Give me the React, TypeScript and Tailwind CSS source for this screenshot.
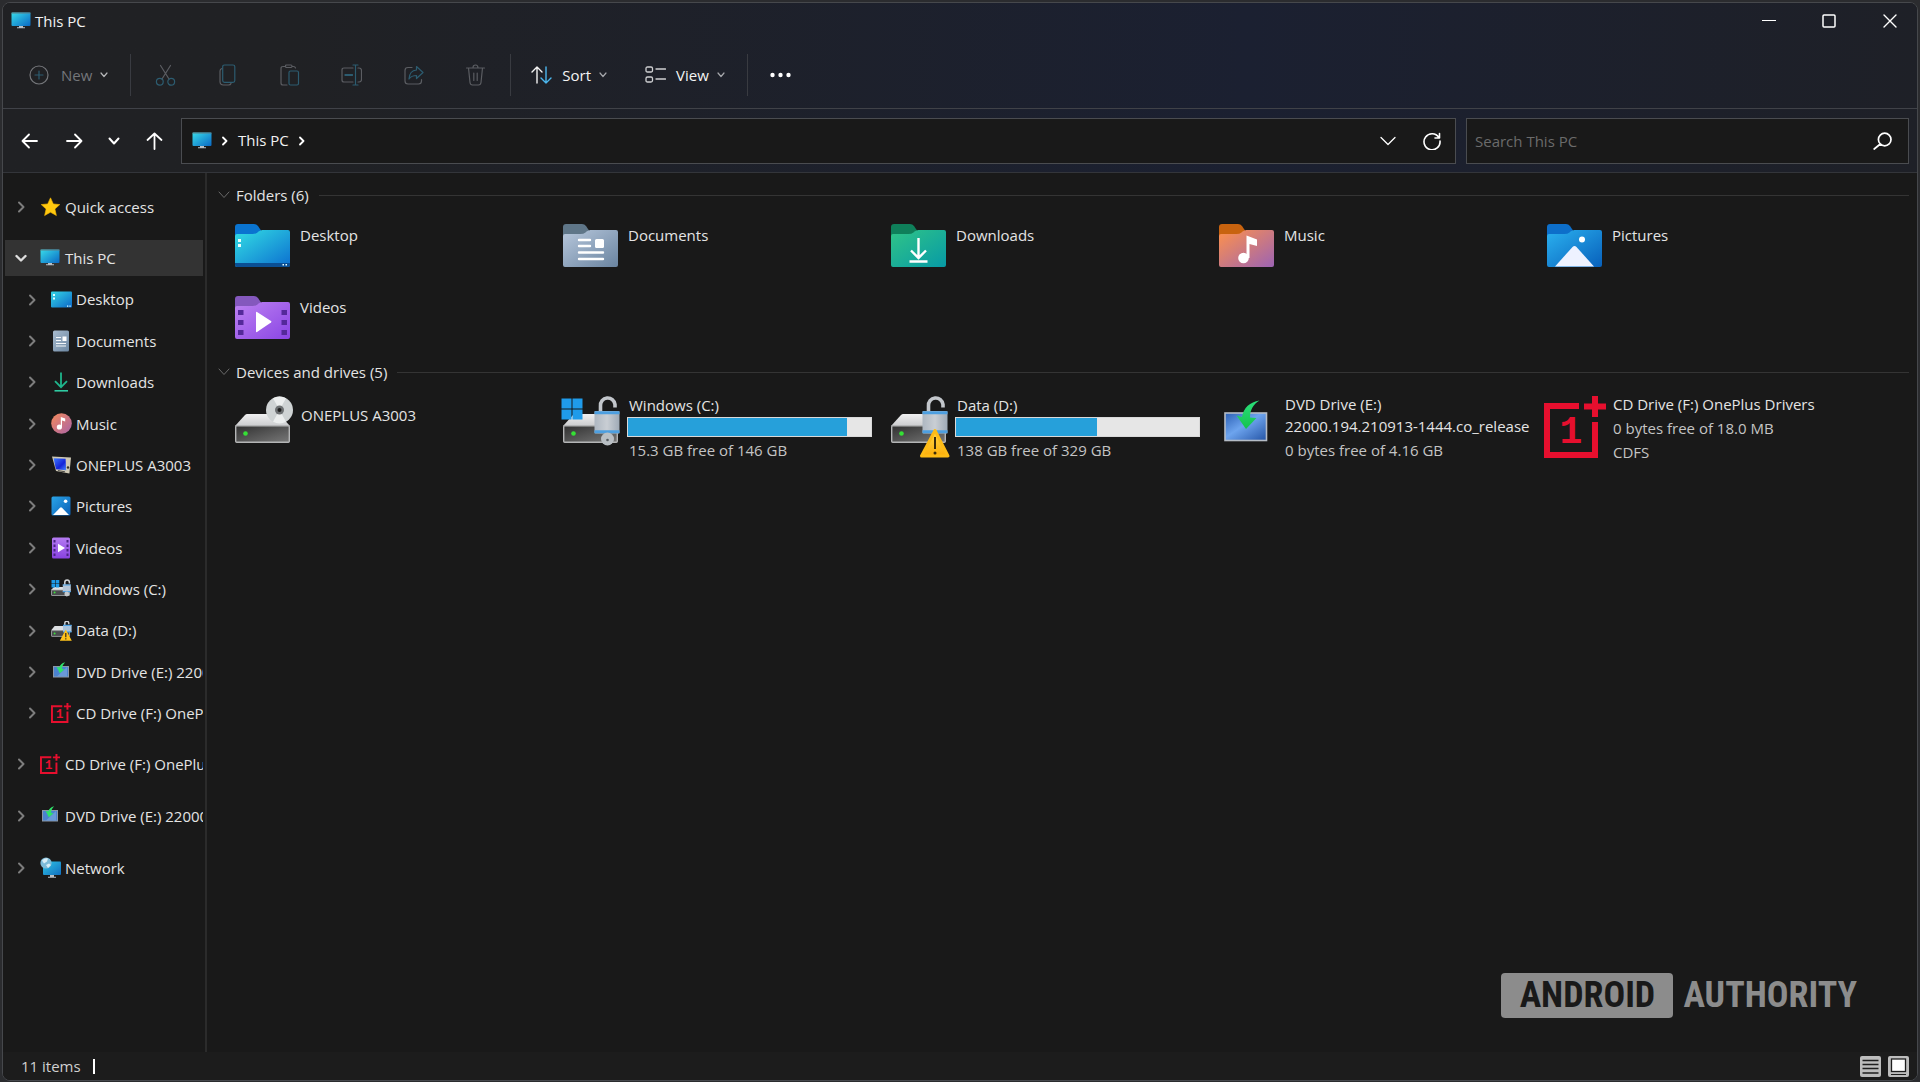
import type { ReactNode } from 'react'
import clsx from 'clsx'

// ─── Small icons (20×20) ──────────────────────────────────────────────────────

function PcIcon() {
  return (
    <svg width="20" height="20" viewBox="0 0 20 20" className="shrink-0" aria-hidden="true">
      <defs>
        <linearGradient id="pc" x1="0" y1="0" x2="1" y2="1">
          <stop offset="0" stopColor="#38dcea" />
          <stop offset="1" stopColor="#0a68c4" />
        </linearGradient>
      </defs>
      <rect x="0.5" y="1.5" width="19" height="13.5" rx="1" fill="url(#pc)" />
      <path d="M0.5 2h19" stroke="#5d7c86" />
      <path d="M8 15h4v1.2h2v1H6v-1h2z" fill="#b9c0c6" />
    </svg>
  )
}

function StarIcon() {
  return (
    <svg width="20" height="20" viewBox="0 0 20 20" className="shrink-0" aria-hidden="true">
      <path
        d="M10.5 0.8l2.8 6.1 6.5.7-4.9 4.4 1.5 6.6-5.9-3.4-5.9 3.4L6.1 12 1.2 7.6l6.5-.7z"
        fill="#ffc90f"
        stroke="#f7b500"
        strokeWidth="0.6"
        strokeLinejoin="round"
      />
    </svg>
  )
}

function DesktopIcon() {
  return (
    <svg width="21" height="20" viewBox="0 0 21 20" className="shrink-0" aria-hidden="true">
      <defs>
        <linearGradient id="desk" x1="0" y1="0" x2="1" y2="1">
          <stop offset="0" stopColor="#35d6e6" />
          <stop offset="1" stopColor="#0c68c8" />
        </linearGradient>
      </defs>
      <rect y="1.5" width="21" height="16" rx="1" fill="url(#desk)" />
      <path d="M2 4h2v2H2zM2 7.5h2v2H2z" fill="#dff" />
      <path d="M16 15.5h1.3v1.2H16zM18.4 15.5h1.3v1.2h-1.3z" fill="#dff" />
    </svg>
  )
}

function DocumentIcon() {
  return (
    <svg width="20" height="22" viewBox="0 0 20 22" className="shrink-0" aria-hidden="true">
      <defs>
        <linearGradient id="doc" x1="0" y1="0" x2="1" y2="1">
          <stop offset="0" stopColor="#a9bccf" />
          <stop offset="1" stopColor="#6c87a2" />
        </linearGradient>
      </defs>
      <rect x="2" y="0.5" width="16" height="21" rx="1.5" fill="url(#doc)" />
      <path d="M5 7.5h5M5 10.5h5M5 13.5h10M5 16h10" stroke="#f4f7fa" strokeWidth="1.1" />
      <rect x="11.5" y="6.5" width="4" height="4.5" fill="#fff" />
    </svg>
  )
}

function DownloadIcon() {
  return (
    <svg width="20" height="20" viewBox="0 0 20 20" className="shrink-0" aria-hidden="true">
      <path d="M10 0.5V15M4 9.2l6 6 6-6" stroke="#1fb58c" strokeWidth="1.8" fill="none" />
      <path d="M3.5 18.8h13.5" stroke="#2fcaa2" strokeWidth="1.6" />
    </svg>
  )
}

function MusicIcon() {
  return (
    <svg width="21" height="21" viewBox="0 0 21 21" className="shrink-0" aria-hidden="true">
      <defs>
        <linearGradient id="mus" x1="0" y1="0" x2="1" y2="1">
          <stop offset="0" stopColor="#f58b5a" />
          <stop offset="1" stopColor="#a963a8" />
        </linearGradient>
      </defs>
      <circle cx="10.5" cy="10.5" r="10.3" fill="url(#mus)" />
      <circle cx="8.4" cy="14" r="2.6" fill="#fff" />
      <path d="M9.8 14V4l4.4 1.6v2.8L11 7.6V14z" fill="#fff" />
    </svg>
  )
}

function PhoneDriveIcon() {
  return (
    <svg width="20" height="20" viewBox="0 0 20 20" className="shrink-0" aria-hidden="true">
      <defs>
        <linearGradient id="dev" x1="0" y1="0" x2="1" y2="1">
          <stop offset="0" stopColor="#3f7bff" />
          <stop offset="0.6" stopColor="#1424d8" />
          <stop offset="1" stopColor="#4a8bff" />
        </linearGradient>
      </defs>
      <path d="M1 1.5l19 1-1.6 16L5 16z" fill="#cfc9b5" />
      <path d="M2.6 3.2l12 .6 .5 11.4-10.2-1z" fill="url(#dev)" />
      <circle cx="17" cy="12.5" r="1.2" fill="#35322a" />
      <path d="M7 15.6l7 1.2" stroke="#4b4a45" />
    </svg>
  )
}

function PictureIcon() {
  return (
    <svg width="20" height="20" viewBox="0 0 20 20" className="shrink-0" aria-hidden="true">
      <defs>
        <linearGradient id="pic" x1="0" y1="0" x2="1" y2="1">
          <stop offset="0" stopColor="#2aa5e8" />
          <stop offset="1" stopColor="#0a5fb6" />
        </linearGradient>
      </defs>
      <rect x="0.5" y="0.5" width="19" height="19" rx="1.5" fill="url(#pic)" />
      <circle cx="14.6" cy="5.2" r="1.8" fill="#fff" />
      <path d="M2 19l7-7.2q1-1 2 0L18 19z" fill="#fff" />
    </svg>
  )
}

function VideoIcon() {
  return (
    <svg width="20" height="22" viewBox="0 0 20 22" className="shrink-0" aria-hidden="true">
      <defs>
        <linearGradient id="vid" x1="0" y1="0" x2="0" y2="1">
          <stop offset="0" stopColor="#b57bf2" />
          <stop offset="1" stopColor="#8842e0" />
        </linearGradient>
      </defs>
      <rect x="1" y="0.5" width="18" height="21" rx="1.5" fill="url(#vid)" />
      <path d="M3.5 3v17M16.5 3v17" stroke="#4a2383" strokeWidth="2" strokeDasharray="2.4 2.1" />
      <path d="M7 6.8l7 4.2-7 4.2z" fill="#fff" />
    </svg>
  )
}

function WindowsDriveIcon() {
  return (
    <svg width="20" height="20" viewBox="0 0 20 20" className="shrink-0" aria-hidden="true">
      <path d="M3 8h14l3 3H0z" fill="#dcdfe2" />
      <rect x="0.5" y="11" width="18" height="5.5" rx="0.5" fill="#4a4c4e" stroke="#a9adb0" strokeWidth="0.8" />
      <circle cx="3.6" cy="13.6" r="1" fill="#3ce03c" />
      <path d="M0.5 1h3.6v3.5H.5zM4.7 1h3.6v3.5H4.7zM.5 5.1h3.6v3.5H.5zM4.7 5.1h3.6v3.5H4.7z" fill="#1e9be8" />
      <path d="M13.8 7V3.2a2.3 2.3 0 0 1 4.6 0v1.3" stroke="#d3d6d9" strokeWidth="1.5" fill="none" />
      <rect x="11.8" y="5.5" width="8" height="7.5" fill="#b7c6d6" />
      <path d="M11.8 6h8M11.8 12.6h8" stroke="#4da3e6" strokeWidth="1.2" />
      <circle cx="15.8" cy="15" r="2.4" fill="#c5c9cc" />
    </svg>
  )
}

function DataDriveIcon() {
  return (
    <svg width="21" height="20" viewBox="0 0 21 20" className="shrink-0" aria-hidden="true">
      <path d="M3.6 5h11l3 4.6H0z" fill="#dcdfe2" />
      <rect x="0.5" y="9.6" width="18" height="5.8" rx="0.5" fill="#4a4c4e" stroke="#a9adb0" strokeWidth="0.8" />
      <circle cx="3.6" cy="12.4" r="1" fill="#3ce03c" />
      <path d="M13.8 5V2.2a2 2 0 0 1 4 0v1" stroke="#d3d6d9" strokeWidth="1.4" fill="none" />
      <rect x="12" y="4" width="8.6" height="7" fill="#a9c3dc" />
      <path d="M12 4.4h8.6M12 10.8h8.6" stroke="#4da3e6" strokeWidth="1.2" />
      <path d="M14.8 8.6L20.8 19.8H8.8z" fill="#ffc31a" />
      <path d="M14.8 12v4.2M14.8 17.2v1.3" stroke="#33291a" strokeWidth="1.2" />
    </svg>
  )
}

function DvdIcon() {
  return (
    <svg width="20" height="20" viewBox="0 0 20 20" className="shrink-0" aria-hidden="true">
      <rect x="2.5" y="4.5" width="15" height="10.5" fill="#4b83cf" stroke="#8b98a8" />
      <path d="M6 14.5L16 5v9.5z" fill="#7fa8dd" opacity="0.6" />
      <path d="M14.2 0.3C10.8 1.2 9 3 8.2 5.4L5.6 4.8l3.2 6.4 4.6-3.8-2.4-.6c.2-2.6 1.2-4.6 3.2-6.5z" fill="#2fe36a" />
    </svg>
  )
}

function NetworkIcon() {
  return (
    <svg width="21" height="22" viewBox="0 0 21 22" className="shrink-0" aria-hidden="true">
      <defs>
        <linearGradient id="net" x1="0" y1="0" x2="1" y2="1">
          <stop offset="0" stopColor="#2fc4e4" />
          <stop offset="1" stopColor="#116fc0" />
        </linearGradient>
      </defs>
      <rect x="3" y="4.5" width="18" height="13.5" rx="1" fill="url(#net)" />
      <path d="M10 18h4v1.8h2v1H8v-1h2z" fill="#b9c0c6" />
      <circle cx="6" cy="6" r="5.6" fill="#7dbbd8" />
      <path d="M2 3.5q3-3 6-2l-1 3-3 2zM6 8l3-1.5 2 1.5-3 3z" fill="#d9eef6" />
    </svg>
  )
}

function OnePlusMark({ size, className }: { size: number; className?: string }) {
  return (
    <svg width={size} height={size} viewBox="0 0 62 62" className={clsx('shrink-0', className)} aria-hidden="true">
      <path d="M35 10H3v49h48V26" fill="none" stroke="#e60f2e" strokeWidth="6" />
      <path d="M40 10.5h22M51 0v21" stroke="#e60f2e" strokeWidth="6" />
      <text
        x="27"
        y="47"
        textAnchor="middle"
        fontSize="38"
        fontWeight="700"
        fill="#e60f2e"
        fontFamily="'Liberation Mono', monospace"
      >
        1
      </text>
    </svg>
  )
}

// ─── Folder icons ─────────────────────────────────────────────────────────────

type FolderKind = 'desktop' | 'documents' | 'downloads' | 'music' | 'pictures' | 'videos'

const folderColors: Record<FolderKind, { tab: string; from: string; to: string }> = {
  desktop: { tab: '#0a74d0', from: '#2fd3e2', to: '#0c6fd0' },
  documents: { tab: '#5f7688', from: '#b0c1d6', to: '#6a84a0' },
  downloads: { tab: '#0f7f5a', from: '#2cc08a', to: '#079aa6' },
  music: { tab: '#c8630f', from: '#f58d55', to: '#9c63b4' },
  pictures: { tab: '#0d6fca', from: '#27a9ea', to: '#0860bb' },
  videos: { tab: '#8458bd', from: '#b87cf0', to: '#8a45e4' },
}

const folderArt: Record<FolderKind, ReactNode> = {
  desktop: (
    <>
      <path d="M0 39h55v2a2 2 0 0 1-2 2H2a2 2 0 0 1-2-2z" fill="#0b4f94" />
      <path d="M3 15h3v3H3zM3 20h3v3H3z" fill="#e9ffff" />
      <path d="M47.5 40H49v1.500h-1.500zM50.500 40H52v1.500h-1.500z" fill="#e9ffff" />
    </>
  ),
  documents: (
    <>
      <path d="M16 16h11M16 22h11M16 28.500h24M16 35h24" stroke="#fff" strokeWidth="2.400" strokeLinecap="round" />
      <rect x="32" y="15" width="9" height="9" rx="1.500" fill="#fff" />
    </>
  ),
  downloads: (
    <path d="M27.500 14v19M20 26.500l7.500 7.500 7.500-7.500M18.500 37.500h18" stroke="#fff" strokeWidth="2.400" fill="none" />
  ),
  music: (
    <>
      <circle cx="24.500" cy="34" r="5.300" fill="#fff" />
      <path d="M27.500 34V11.500l10.500 4V22l-7.500-2V34z" fill="#fff" />
    </>
  ),
  pictures: (
    <>
      <circle cx="35" cy="15.500" r="3" fill="#fff" />
      <path d="M8 42.500L25.500 23q2-2 4 0L47 42.500z" fill="#eef2ff" />
    </>
  ),
  videos: (
    <>
      <path d="M3 14h5.500v5H3zM3 24h5.500v5H3zM3 34h5.500v5H3zM46.500 14H52v5h-5.500zM46.500 24H52v5h-5.500zM46.500 34H52v5h-5.500z" fill="#54299a" />
      <path d="M21 16.500q0-1 1-.500l14 9q1 .700 0 1.500l-14 9.500q-1 .500-1-.500z" fill="#fff" />
    </>
  ),
}

function FolderIcon({ kind }: { kind: FolderKind }) {
  const { tab, from, to } = folderColors[kind]
  return (
    <svg width="66" height="43" viewBox="-3 0 66 43" className="shrink-0" aria-hidden="true">
      <defs>
        <linearGradient id={`folder-${kind}`} x1="0" y1="0" x2="1" y2="1">
          <stop offset="0.1" stopColor={from} />
          <stop offset="1" stopColor={to} />
        </linearGradient>
      </defs>
      <path d="M0 3a3 3 0 0 1 3-3h16q2.500 0 4 2l4 6v8H0z" fill={tab} />
      <path
        d="M0 12a2 2 0 0 1 2-2h15.500q3 0 5-1.500l1-1q2-1.500 4-1.500H53a2 2 0 0 1 2 2V41a2 2 0 0 1-2 2H2a2 2 0 0 1-2-2z"
        fill={`url(#folder-${kind})`}
      />
      {folderArt[kind]}
    </svg>
  )
}

// ─── Drive icons ──────────────────────────────────────────────────────────────

function DriveSvg({ children }: { children: ReactNode }) {
  return (
    <svg width="66" height="66" viewBox="0 0 66 66" className="shrink-0" aria-hidden="true">
      {children}
    </svg>
  )
}

function DriveBox({ id }: { id: string }) {
  return (
    <>
      <defs>
        <linearGradient id={`${id}-top`} x1="0" y1="0" x2="0" y2="1">
          <stop offset="0" stopColor="#f0f0f1" />
          <stop offset="1" stopColor="#cbccce" />
        </linearGradient>
        <linearGradient id={`${id}-front`} x1="0" y1="0" x2="1" y2="1">
          <stop offset="0" stopColor="#303030" />
          <stop offset="1" stopColor="#787878" />
        </linearGradient>
      </defs>
      <path d="M15 20h31q1 0 2 1l10 11H3l10-11q1-1 2-1z" fill={`url(#${id}-top)`} />
      <rect x="3.700" y="31.700" width="53.600" height="16.600" rx="1" fill={`url(#${id}-front)`} stroke="#b4b5b6" strokeWidth="1.400" />
      <circle cx="13.500" cy="39.500" r="2.300" fill="#35e035" />
    </>
  )
}

function Padlock({ id }: { id: string }) {
  return (
    <>
      <defs>
        <linearGradient id={`${id}-lock`} x1="0" y1="0" x2="1" y2="0">
          <stop offset="0" stopColor="#aeb7c1" />
          <stop offset="0.5" stopColor="#c9ced4" />
          <stop offset="1" stopColor="#9faab6" />
        </linearGradient>
      </defs>
      <path d="M40.500 18V12a7 7 0 0 1 14.500-1.500v3" fill="none" stroke="#c2c6cb" strokeWidth="3.600" />
      <rect x="34.500" y="17" width="25" height="22.500" rx="1" fill={`url(#${id}-lock)`} />
      <path d="M34.500 18.800h25M34.500 37.800h25" stroke="#4d9fe0" strokeWidth="3" />
    </>
  )
}

function OpticalDrive() {
  return (
    <DriveSvg>
      <DriveBox id="optical" />
      <circle cx="47.500" cy="16" r="13.500" fill="#cfd3d4" />
      <path d="M47.500 16L41 4.200A13.500 13.500 0 0 1 54 4.200zM47.500 16l6.500 11.800a13.500 13.500 0 0 1-13 0z" fill="#eceeee" />
      <circle cx="47.500" cy="16" r="4.500" fill="#6d7072" />
      <circle cx="47.500" cy="16" r="2" fill="#1e1e1e" />
    </DriveSvg>
  )
}

function SystemDrive() {
  return (
    <DriveSvg>
      <DriveBox id="system" />
      <path d="M1.500 4.500h10v10h-10zM12.500 4.500h10v10h-10zM1.500 15.500h10v10h-10zM12.500 15.500h10v10h-10z" fill="#1f9bea" />
      <Padlock id="system" />
      <circle cx="47.500" cy="45" r="6.500" fill="#b9bfc4" />
      <circle cx="47.500" cy="46" r="1.300" fill="#555b60" />
    </DriveSvg>
  )
}

function DataDrive() {
  return (
    <DriveSvg>
      <defs>
        <linearGradient id="warn" x1="0" y1="0" x2="0" y2="1">
          <stop offset="0" stopColor="#ffd84a" />
          <stop offset="1" stopColor="#fcae0a" />
        </linearGradient>
      </defs>
      <DriveBox id="data" />
      <Padlock id="data" />
      <path
        d="M47 36.500L60 62H33.500z"
        fill="url(#warn)"
        stroke="#fdbb16"
        strokeWidth="3"
        strokeLinejoin="round"
      />
      <path d="M47 43v12" stroke="#3a2c0b" strokeWidth="2" />
      <circle cx="47" cy="59" r="1.500" fill="#3a2c0b" />
    </DriveSvg>
  )
}

function DvdDrive() {
  return (
    <DriveSvg>
      <defs>
        <linearGradient id="dvd" x1="0" y1="0" x2="1" y2="1">
          <stop offset="0" stopColor="#2b5fb4" />
          <stop offset="0.45" stopColor="#6da4ee" />
          <stop offset="1" stopColor="#2454a6" />
        </linearGradient>
        <linearGradient id="dvd-arrow" x1="0" y1="0" x2="0" y2="1">
          <stop offset="0" stopColor="#2be07a" />
          <stop offset="1" stopColor="#14c24e" />
        </linearGradient>
      </defs>
      <rect x="9" y="19" width="41.500" height="27.500" fill="url(#dvd)" stroke="#b5bcc6" strokeWidth="1.600" />
      <path
        d="M43.500 6.500C34 8 27.500 13.500 26 23l-5.500-1.500 9.500 13.500 10.500-11-6.500-.500C34 16 37 10.500 43.500 6.500z"
        fill="url(#dvd-arrow)"
      />
    </DriveSvg>
  )
}

function OnePlusDrive() {
  return (
    <span className="flex w-[66px] shrink-0">
      <OnePlusMark size={62} className="mt-0.5" />
    </span>
  )
}

// ─── Glyphs ───────────────────────────────────────────────────────────────────

function Glyph({
  w,
  h,
  d,
  accent,
  stroke = 1.2,
  accentClass = 'stroke-[#2c5c70]',
  className,
}: {
  w: number
  h: number
  d: string
  accent?: string
  stroke?: number
  accentClass?: string
  className?: string
}) {
  return (
    <svg
      width={w}
      height={h}
      viewBox={`0 0 ${w} ${h}`}
      fill="none"
      stroke="currentColor"
      strokeWidth={stroke}
      strokeLinecap="round"
      strokeLinejoin="round"
      className={clsx('shrink-0', className)}
      aria-hidden="true"
    >
      <path d={d} />
      {accent && <path d={accent} className={accentClass} />}
    </svg>
  )
}

const fileActions = [
  {
    label: 'Cut',
    d: 'M5.500 1.500L14 15M15.500 1.500L7 15',
    accent: 'M8.200 17.800a3.400 3.400 0 1 1-6.800 0 3.400 3.400 0 0 1 6.800 0zM19.600 17.800a3.400 3.400 0 1 1-6.800 0 3.400 3.400 0 0 1 6.800 0z',
  },
  {
    label: 'Copy',
    d: 'M5 4.500q-2 .5-2 2.500v10.500q0 3.500 3.500 3.500h5q2 0 2.500-1.500',
    accent: 'M7.500 1h8.500q1.800 0 1.800 1.800v13.700q0 1.800-1.800 1.800H7.500q-1.800 0-1.800-1.800V2.800Q5.700 1 7.500 1z',
  },
  {
    label: 'Paste',
    d: 'M6.500 2.500H4Q2 2.500 2 4.500V19q0 2 2 2h4M13 2.500h1.500q1.500 0 2 1.500M7.500 1h4.500q1 0 1 1.200T12 3.500H7.500q-1 0-1-1.300T7.500 1z',
    accent: 'M11.500 7H18q1.500 0 1.500 1.500v11q0 1.500-1.500 1.500h-6.500q-1.500 0-1.500-1.500v-11Q10 7 11.500 7z',
  },
  {
    label: 'Rename',
    d: 'M12 4H3Q1 4 1 6v10q0 2 2 2h9M17 4h1q2.500 0 2.500 2.500v9Q20.500 18 18 18h-1',
    accent: 'M12 1h5M12 21h5M14.500 1v20M4 11.500h7.500M4 10.500h7.500',
  },
  {
    label: 'Share',
    d: 'M9 3.500H5Q2 3.500 2 6.500V17q0 3 3 3h10.500q3 0 3-3v-1.500',
    accent: 'M13.500 2.500l6.500 6-6.500 6V11.500q-5 0-7.500 3.500Q6.500 6.500 13.500 6z',
  },
  {
    label: 'Delete',
    d: 'M1.500 4h18M8 4q0-3 2.500-3T13 4M3.500 4L5 18.500Q5.300 21 7.500 21h6q2.200 0 2.500-2.500L17.500 4M8.800 9v7.500M12.200 9v7.500',
  },
]

function Separator({ className }: { className?: string }) {
  return <div className={clsx('h-[42px] w-px shrink-0 bg-[#393b41]', className)} />
}

function CaretDown({ className }: { className?: string }) {
  return <Glyph w={8} h={6} d="M1 1l3 3.500L7 1" className={className} />
}

// ─── Title bar and toolbar ────────────────────────────────────────────────────

function TitleBar() {
  return (
    <header className="flex h-[35px] items-center pl-2">
      <PcIcon />
      <h1 className="ml-1 flex-1 text-[15px] leading-5 text-[#f2f2f2]">This PC</h1>
      <div className="flex h-full text-white">
        <button type="button" aria-label="Minimize" className="grid w-[55px] place-items-center">
          <Glyph w={14} h={14} d="M0.500 6.500h13" />
        </button>
        <button type="button" aria-label="Maximize" className="grid w-[66px] place-items-center">
          <Glyph w={14} h={14} d="M2 1h10q1 0 1 1v10q0 1-1 1H2q-1 0-1-1V2q0-1 1-1z" stroke={1.5} />
        </button>
        <button type="button" aria-label="Close" className="grid w-[55px] place-items-center">
          <Glyph w={14} h={14} d="M1 1l12 12M13 1L1 13" stroke={1.4} />
        </button>
      </div>
    </header>
  )
}

function Toolbar() {
  return (
    <div role="toolbar" aria-label="Commands" className="flex h-[71px] items-center border-b border-[#404248] pl-[26px] pt-1 text-[15px]">
      <button type="button" disabled className="flex items-center text-[#74767a]">
        <Glyph w={20} h={20} d="M10 1a9 9 0 1 1 0 18 9 9 0 0 1 0-18z" accent="M10 6v8M6 10h8" />
        <span className="ml-3">New</span>
        <CaretDown className="ml-2 text-[#b5b6b8]" />
      </button>
      <Separator className="ml-[22px] mr-[3px]" />
      {fileActions.map(({ label, d, accent }) => (
        <button key={label} type="button" disabled aria-label={label} className="grid h-10 w-[62px] place-items-center text-[#5b5d62]">
          <Glyph w={21} h={22} d={d} accent={accent} />
        </button>
      ))}
      <Separator className="ml-1" />
      <button type="button" className="ml-5 flex items-center text-[#f4f4f4]">
        <Glyph
          w={21}
          h={18}
          d="M6 17V1M1 6l5-5 5 5"
          accent="M15 1v16M10 12l5 5 5-5"
          accentClass="stroke-[#4cb7ee]"
          stroke={1.4}
        />
        <span className="ml-2.5">Sort</span>
        <CaretDown className="ml-2 text-[#a5a7ab]" />
      </button>
      <button type="button" className="ml-[38px] flex items-center text-[#f4f4f4]">
        <Glyph
          w={21}
          h={18}
          d="M2.500 1h3.500q1.500 0 1.500 1.500v2Q7.500 6 6 6H2.500Q1 6 1 4.500v-2Q1 1 2.500 1zM2.500 11h3.500q1.500 0 1.500 1.500v2q0 1.500-1.500 1.500H2.500Q1 16 1 14.500v-2Q1 11 2.500 11zM11 3h9.500M11 13h9.500"
          stroke={1.3}
          className="text-[#cfd0d2]"
        />
        <span className="ml-2.5">View</span>
        <CaretDown className="ml-2 text-[#a5a7ab]" />
      </button>
      <Separator className="ml-[22px]" />
      <button type="button" aria-label="See more" className="ml-5 p-0.5 text-white">
        <svg width="21" height="6" viewBox="0 0 21 6" fill="currentColor" aria-hidden="true">
          <circle cx="2.500" cy="3" r="2.200" />
          <circle cx="10.500" cy="3" r="2.200" />
          <circle cx="18.500" cy="3" r="2.200" />
        </svg>
      </button>
    </div>
  )
}

function NavBar() {
  return (
    <div className="flex h-16 items-center border-b border-[#33353a] pl-1 pr-2 text-[15px] text-white">
      <button type="button" aria-label="Back" className="grid h-9 w-[45px] place-items-center">
        <Glyph w={17} h={16} d="M16 8H1.500M8 1.500L1.500 8 8 14.500" stroke={1.8} />
      </button>
      <button type="button" aria-label="Forward" className="grid h-9 w-[45px] place-items-center">
        <Glyph w={17} h={16} d="M1 8h14.500M9 1.500L15.500 8 9 14.500" stroke={1.8} />
      </button>
      <button type="button" aria-label="Recent locations" className="grid h-9 w-[34px] place-items-center">
        <Glyph w={12} h={8} d="M1.500 1.500L6 6.500l4.500-5" stroke={2} />
      </button>
      <button type="button" aria-label="Up" className="grid h-9 w-[46px] place-items-center">
        <Glyph w={17} h={18} d="M8.500 17V1.500M1.500 8l7-6.500 7 6.500" stroke={1.8} />
      </button>
      <div className="ml-1 flex h-[46px] flex-1 items-center border border-[#4a4c50] bg-[#191919] pl-2.5">
        <PcIcon />
        <Glyph w={6} h={10} d="M1 1.500L4.500 5 1 8.500" stroke={1.8} className="ml-2.5" />
        <a href="#this-pc" className="ml-2.5 text-[#f2f2f2]">
          This PC
        </a>
        <Glyph w={6} h={10} d="M1 1.500L4.500 5 1 8.500" stroke={1.8} className="ml-2.5" />
        <button type="button" aria-label="Previous locations" className="ml-auto grid h-9 w-11 place-items-center">
          <Glyph w={16} h={10} d="M1 1.500l7 7 7-7" stroke={1.3} />
        </button>
        <button type="button" aria-label="Refresh" className="mr-px grid h-9 w-11 place-items-center">
          <Glyph w={18} h={18} d="M15.800 5.500A8 8 0 1 0 17 9M16.500 1.500v4.500H12" stroke={1.6} />
        </button>
      </div>
      <label className="ml-2.5 flex h-[46px] w-[443px] items-center border border-[#4a4c50] bg-[#191919] pl-2 pr-4">
        <input
          type="search"
          placeholder="Search This PC"
          aria-label="Search This PC"
          className="min-w-0 flex-1 bg-transparent leading-5 outline-none placeholder:text-[#6b6b6b]"
        />
        <Glyph w={19} h={18} d="M18 7.500a6.300 6.300 0 1 1-12.600 0 6.300 6.300 0 0 1 12.600 0zM7.300 12L1.200 17" stroke={1.7} />
      </label>
    </div>
  )
}

// ─── Sidebar ──────────────────────────────────────────────────────────────────

const thisPcItems: { label: string; icon: ReactNode }[] = [
  { label: 'Desktop', icon: <DesktopIcon /> },
  { label: 'Documents', icon: <DocumentIcon /> },
  { label: 'Downloads', icon: <DownloadIcon /> },
  { label: 'Music', icon: <MusicIcon /> },
  { label: 'ONEPLUS A3003', icon: <PhoneDriveIcon /> },
  { label: 'Pictures', icon: <PictureIcon /> },
  { label: 'Videos', icon: <VideoIcon /> },
  { label: 'Windows (C:)', icon: <WindowsDriveIcon /> },
  { label: 'Data (D:)', icon: <DataDriveIcon /> },
  { label: 'DVD Drive (E:) 22000.194.210913-1444.co_release', icon: <DvdIcon /> },
  { label: 'CD Drive (F:) OnePlus Drivers', icon: <OnePlusMark size={20} /> },
]

function TreeRow({
  label,
  icon,
  nested,
  selected,
  className,
}: {
  label: string
  icon: ReactNode
  nested?: boolean
  selected?: boolean
  className?: string
}) {
  return (
    <a
      href="#item"
      className={clsx(
        'flex items-center overflow-hidden whitespace-nowrap',
        nested ? 'pl-[21px]' : 'pl-2.5',
        selected && 'bg-[#333333]',
        className
      )}
    >
      {selected ? (
        <Glyph w={12} h={12} d="M1.500 4L6 8.500 10.500 4" stroke={2.4} className="text-[#dedede]" />
      ) : (
        <Glyph w={12} h={12} d="M4 1.500L8.500 6 4 10.500" stroke={2} className="text-[#7d7d7d]" />
      )}
      <span className="ml-[13px] flex w-5 shrink-0 justify-center">{icon}</span>
      <span className="ml-[5px]">{label}</span>
    </a>
  )
}

function Sidebar() {
  return (
    <nav aria-label="Navigation pane" className="w-[204px] shrink-0 border-r-2 border-[#2b2b2b] pl-0.5 pr-0.5 pt-2">
      <TreeRow label="Quick access" icon={<StarIcon />} className="h-[52px]" />
      <TreeRow label="This PC" icon={<PcIcon />} selected className="mt-[7px] h-9" />
      <ul className="mt-[3px] grid h-[455px] auto-rows-fr">
        {thisPcItems.map((item) => (
          <li key={item.label} className="grid">
            <TreeRow {...item} nested />
          </li>
        ))}
      </ul>
      <TreeRow label="CD Drive (F:) OnePlus Drivers" icon={<OnePlusMark size={20} />} className="mt-1 h-[52px]" />
      <TreeRow label="DVD Drive (E:) 22000.194.210913-1444.co_release" icon={<DvdIcon />} className="h-[52px]" />
      <TreeRow label="Network" icon={<NetworkIcon />} className="h-[52px]" />
    </nav>
  )
}

// ─── Content ──────────────────────────────────────────────────────────────────

const folders: { label: string; kind: FolderKind }[] = [
  { label: 'Desktop', kind: 'desktop' },
  { label: 'Documents', kind: 'documents' },
  { label: 'Downloads', kind: 'downloads' },
  { label: 'Music', kind: 'music' },
  { label: 'Pictures', kind: 'pictures' },
  { label: 'Videos', kind: 'videos' },
]

interface Drive {
  name: string
  icon: ReactNode
  second?: string
  used?: number
  details?: string[]
}

const drives: Drive[] = [
  { name: 'ONEPLUS A3003', icon: <OpticalDrive /> },
  { name: 'Windows (C:)', icon: <SystemDrive />, used: 90, details: ['15.3 GB free of 146 GB'] },
  { name: 'Data (D:)', icon: <DataDrive />, used: 58, details: ['138 GB free of 329 GB'] },
  {
    name: 'DVD Drive (E:)',
    icon: <DvdDrive />,
    second: '22000.194.210913-1444.co_release',
    details: ['0 bytes free of 4.16 GB'],
  },
  {
    name: 'CD Drive (F:) OnePlus Drivers',
    icon: <OnePlusDrive />,
    details: ['0 bytes free of 18.0 MB', 'CDFS'],
  },
]

function GroupHeader({ title, className }: { title: string; className?: string }) {
  return (
    <div className={clsx('flex h-[22px] items-center pl-[11px] pr-2', className)}>
      <Glyph w={12} h={8} d="M1 1l5 5.500L11 1" stroke={1} className="text-[#6a6a6a]" />
      <h2 className="ml-1.5 leading-[22px]">{title}</h2>
      <span className="ml-2.5 h-px flex-1 bg-[#343434]" />
    </div>
  )
}

function DriveTile({ name, icon, second, used, details }: Drive) {
  const hasBar = used !== undefined
  return (
    <a href="#drive" className="flex leading-[22px]">
      <span className="flex shrink-0 pt-px">{icon}</span>
      <div className={clsx('ml-px min-w-0', !details && 'pt-[11px]', hasBar && 'pt-px')}>
        <p className="pl-0.5">{name}</p>
        {second && <p className="pl-0.5">{second}</p>}
        {hasBar && (
          <div className="mt-px h-5 w-[245px] border border-[#d9d9d9] bg-[#e6e6e6]">
            <div className="h-full bg-[#26a0da]" style={{ width: `${used}%` }} />
          </div>
        )}
        {details?.map((line) => (
          <p key={line} className="mt-0.5 pl-0.5 text-[#c4c4c4]">
            {line}
          </p>
        ))}
      </div>
    </a>
  )
}

function Content() {
  return (
    <main className="min-w-0 flex-1 pt-[11px]">
      <GroupHeader title="Folders (6)" />
      <div className="mt-[18px] grid grid-cols-[repeat(auto-fill,328px)] gap-y-[29px] pl-[25px]">
        {folders.map(({ label, kind }) => (
          <a key={kind} href="#folder" className="flex h-[43px]">
            <FolderIcon kind={kind} />
            <span className="ml-0.5 leading-[22px]">{label}</span>
          </a>
        ))}
      </div>
      <GroupHeader title="Devices and drives (5)" className="mt-[22px]" />
      <div className="mt-2.5 grid grid-cols-[repeat(auto-fill,328px)] pl-[25px]">
        {drives.map((drive) => (
          <DriveTile key={drive.name} {...drive} />
        ))}
      </div>
    </main>
  )
}

function StatusBar() {
  return (
    <footer className="flex h-7 items-center bg-[#1c1c1c] pl-[18px] pr-2 text-[15px] text-[#d0d0d0]">
      <span>11 items</span>
      <span className="ml-3 h-[15px] w-0.5 bg-white" />
      <button type="button" aria-label="Details view" className="ml-auto">
        <svg width="21" height="21" viewBox="0 0 21 21" aria-hidden="true">
          <rect width="21" height="21" rx="2" fill="#bdbdbd" />
          <path d="M2.500 4.500h16M2.500 8.500h16M2.500 12.500h16M2.500 17h16" stroke="#1e1e1e" strokeWidth="1.300" />
        </svg>
      </button>
      <button type="button" aria-label="Large icons view" className="ml-[7px]">
        <svg width="21" height="21" viewBox="0 0 21 21" aria-hidden="true">
          <rect width="21" height="21" rx="2" fill="#bdbdbd" />
          <rect x="3.500" y="3" width="14" height="12.500" fill="#fff" stroke="#1e1e1e" strokeWidth="1.300" />
          <path d="M3 18.500h15" stroke="#1e1e1e" strokeWidth="1.200" />
        </svg>
      </button>
    </footer>
  )
}

function Watermark() {
  return (
    <div className="pointer-events-none absolute bottom-[62px] right-[60px] flex items-center gap-2.5 font-['Roboto_Condensed','Liberation_Sans_Narrow','Open_Sans_Condensed',Roboto,sans-serif] text-[36px] font-bold leading-[45px]">
      <span className="w-[172px] rounded bg-[#8c8c8c] text-center text-[#191919]">ANDROID</span>
      <span className="text-[#8c8c8c]">AUTHORITY</span>
    </div>
  )
}

export default function App() {
  return (
    <div className="h-screen overflow-hidden bg-[#2b2c2f] px-0.5 pb-px pt-0.5 font-['Open_Sans','Noto_Sans',sans-serif] text-[15px] text-[#e4e4e4]">
      <div className="relative flex h-full flex-col overflow-hidden rounded-lg border border-[#46484c] bg-[#191919]">
        <div className="bg-linear-to-r from-[#202124] from-15% via-[#1b2031] via-65% to-[#1e2027]">
          <TitleBar />
          <Toolbar />
          <NavBar />
        </div>
        <div className="flex min-h-0 flex-1">
          <Sidebar />
          <Content />
        </div>
        <StatusBar />
        <Watermark />
      </div>
    </div>
  )
}
